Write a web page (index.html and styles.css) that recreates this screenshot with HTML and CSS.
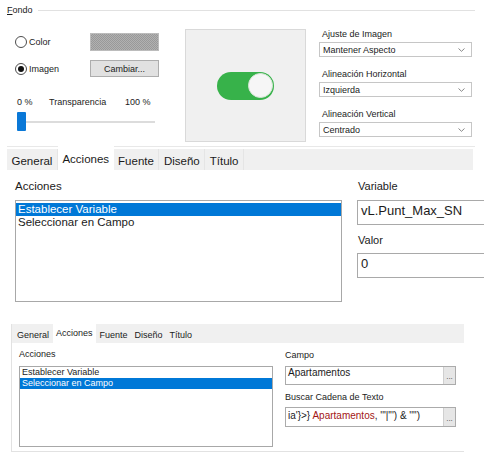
FILE: index.html
```html
<!DOCTYPE html>
<html lang="es">
<head>
<meta charset="utf-8">
<title>Propiedades</title>
<link rel="stylesheet" href="styles.css">
</head>
<body>
<section class="fondo">
  <div class="legend"><span><u>F</u>ondo</span><span class="rule"></span></div>
  <div class="fondo-body">
    <div class="left">
      <div class="opt-grid">
        <div class="radio-row"><span class="radio"></span><span>Color</span></div>
        <div class="swatch"></div>
        <div class="radio-row"><span class="radio on"></span><span>Imagen</span></div>
        <div class="btn">Cambiar...</div>
      </div>
      <div class="trans-labels"><span class="t0">0 %</span><span class="tmid">Transparencia</span><span>100 %</span></div>
      <div class="slider"><span class="thumb"></span><span class="track"></span></div>
    </div>
    <div class="preview">
      <div class="toggle"><span class="knob"></span></div>
    </div>
    <div class="right">
      <div class="field">
        <div class="flabel">Ajuste de Imagen</div>
        <div class="select"><span>Mantener Aspecto</span><svg class="chev" width="7" height="4" viewBox="0 0 7 4"><path d="M0.5 0.5 L3.5 3.3 L6.5 0.5" fill="none" stroke="#7a7a7a" stroke-width="0.9"/></svg></div>
      </div>
      <div class="field">
        <div class="flabel">Alineación Horizontal</div>
        <div class="select"><span>Izquierda</span><svg class="chev" width="7" height="4" viewBox="0 0 7 4"><path d="M0.5 0.5 L3.5 3.3 L6.5 0.5" fill="none" stroke="#7a7a7a" stroke-width="0.9"/></svg></div>
      </div>
      <div class="field">
        <div class="flabel">Alineación Vertical</div>
        <div class="select"><span>Centrado</span><svg class="chev" width="7" height="4" viewBox="0 0 7 4"><path d="M0.5 0.5 L3.5 3.3 L6.5 0.5" fill="none" stroke="#7a7a7a" stroke-width="0.9"/></svg></div>
      </div>
    </div>
  </div>
  <div class="sep"></div>
</section>

<section class="big">
  <div class="tabs-big">
    <span class="tab">General</span>
    <span class="tab active">Acciones</span>
    <span class="tab">Fuente</span>
    <span class="tab">Diseño</span>
    <span class="tab">Título</span>
  </div>
  <div class="big-body">
    <div class="col-list">
      <div class="lbl-big">Acciones</div>
      <div class="list-big">
        <div class="item sel">Establecer Variable</div>
        <div class="item">Seleccionar en Campo</div>
      </div>
    </div>
    <div class="col-var">
      <div class="lbl-var">Variable</div>
      <div class="input-big">vL.Punt_Max_SN</div>
      <div class="lbl-var second">Valor</div>
      <div class="input-big">0</div>
    </div>
  </div>
</section>

<section class="small">
  <div class="tabs-sm">
    <span class="tab">General</span>
    <span class="tab active">Acciones</span>
    <span class="tab">Fuente</span>
    <span class="tab">Diseño</span>
    <span class="tab">Título</span>
  </div>
  <div class="small-body">
    <div class="col-list-sm">
      <div class="lbl-sm">Acciones</div>
      <div class="list-sm">
        <div class="item">Establecer Variable</div>
        <div class="item sel">Seleccionar en Campo</div>
      </div>
    </div>
    <div class="col-fields">
      <div class="lbl-campo">Campo</div>
      <div class="input-sm"><span class="val">Apartamentos</span><span class="dots">...</span></div>
      <div class="lbl-campo second">Buscar Cadena de Texto</div>
      <div class="input-sm tall"><span class="val">ia'}&gt;} <span class="red">Apartamentos</span>, '"|"') &amp; '"')</span><span class="dots">...</span></div>
    </div>
  </div>
</section>
</body>
</html>
```

FILE: styles.css
```css
* { box-sizing: border-box; }
html, body { margin: 0; padding: 0; }
body {
  width: 484px;
  height: 455px;
  overflow: hidden;
  background: #fff;
  font-family: "Liberation Sans", Arial, sans-serif;
  color: #1b1b1b;
}

/* ---------- Fondo ---------- */
.fondo { padding: 4px 9px 0 7px; font-size: 9px; }
.legend { display: flex; align-items: center; height: 12px; line-height: 12px; }
.legend .rule { flex: 1; height: 1px; background: #e1e1e1; margin-left: 5px; }
.fondo-body { display: flex; margin-top: 13px; }

.left { margin-left: 8px; width: 144px; padding-top: 4px; flex-shrink: 0; }
.opt-grid {
  display: grid;
  grid-template-columns: 75px 69px;
  grid-template-rows: 18px 17px;
  row-gap: 9px;
  align-items: center;
}
.radio-row { display: flex; align-items: center; gap: 2px; }
.radio {
  width: 12px; height: 12px;
  border: 1px solid #4d4d4d;
  border-radius: 50%;
  background: #fff;
  display: flex; align-items: center; justify-content: center;
}
.radio.on::after { content: ""; width: 6px; height: 6px; border-radius: 50%; background: #111; }
.swatch {
  height: 18px;
  border: 1px solid #bcbcbc;
  background-color: #a4a4a4;
  background-image: repeating-conic-gradient(#999 0 25%, #b1b1b1 0 50%);
  background-size: 2px 2px;
}
.btn {
  height: 17px;
  border: 1px solid #adadad;
  background: #e1e1e1;
  display: flex; align-items: center; justify-content: center;
}
.trans-labels { display: flex; margin-top: 20px; padding-left: 2px; line-height: 10px; }
.t0 { width: 32px; }
.tmid { width: 76px; }
.slider { display: flex; align-items: center; margin: 5px 0 0 2px; width: 138px; }
.thumb { width: 9px; height: 19px; background: #0a78d7; border-radius: 1px; }
.track { flex: 1; height: 2px; background: #dcdcdc; }

.preview {
  margin-left: 26px;
  width: 121px; height: 113px;
  flex-shrink: 0;
  background: #f0f0f0;
  border: 1px solid #d9d9d9;
  display: flex; align-items: center; justify-content: center;
}
.toggle {
  width: 57px; height: 28px;
  border-radius: 14px;
  background: #37b24a;
  display: flex; align-items: center; justify-content: flex-end;
  padding-right: 1px;
}
.knob {
  width: 25px; height: 25px;
  border-radius: 50%;
  background: #f6f6f6;
  border: 1px solid #d6e6d6;
}

.right { margin-left: 13px; width: 153px; flex-shrink: 0; }
.field + .field { margin-top: 12px; }
.flabel { line-height: 11px; margin-bottom: 2px; padding-left: 3px; }
.select {
  height: 15px;
  border: 1px solid #c6c6c6;
  display: flex; align-items: center; justify-content: space-between;
  padding: 0 6px 0 3px;
  background: #fff;
}
.sep { margin-top: 4px; height: 1px; background: #e8e8e8; }

/* ---------- Big tabs panel ---------- */
.big { margin: 2px 11px 0 7px; }
.tabs-big { display: flex; height: 21px; background: #f0f0f0; font-size: 11.5px; }
.tabs-big .tab { padding: 4px 4.5px 0; line-height: 16px; border-right: 1px solid #e5e5e5; }
.tabs-big .tab.active { background: #fff; margin-top: -3px; height: 24px; padding-top: 5px; border-right: none; }
.big-body { display: flex; padding: 9px 0 0 8px; }
.col-list { width: 327px; flex-shrink: 0; }
.lbl-big { font-size: 11.5px; line-height: 14px; margin-bottom: 7px; }
.list-big {
  height: 102px;
  border: 1px solid #a8a8a8;
  padding-top: 2px;
  font-size: 11.5px;
  line-height: 13px;
}
.item { padding-left: 2px; white-space: nowrap; }
.item.sel { background: #0078d7; color: #fff; }
.col-var { margin-left: 15px; width: 140px; flex-shrink: 0; }
.lbl-var { font-size: 11px; line-height: 14px; margin-bottom: 7px; padding-left: 1px; }
.lbl-var.second { margin-top: 8px; margin-bottom: 6px; }
.input-big {
  height: 25px;
  border: 1px solid #a9a9a9;
  font-size: 13px;
  line-height: 16px;
  padding: 2px 0 0 3px;
  white-space: nowrap;
}

/* ---------- Small tabs panel ---------- */
.small {
  margin: 22px 20px 0 11px;
  border-left: 1px solid #e2e2e2;
  border-bottom: 1px solid #e2e2e2;
  padding-bottom: 4px;
  font-size: 9px;
}
.tabs-sm { display: flex; height: 19px; background: #f0f0f0; }
.tabs-sm .tab { padding: 3px 3.5px 0; line-height: 16px; }
.tabs-sm .tab:first-child { padding-left: 5px; }
.tabs-sm .tab.active { background: #fff; padding-top: 1px; }
.small-body { display: flex; padding: 5px 0 0 7px; }
.col-list-sm { width: 254px; flex-shrink: 0; }
.lbl-sm { line-height: 12px; margin-bottom: 6px; }
.list-sm { height: 81px; border: 1px solid #a8a8a8; line-height: 11px; }
.col-fields { margin-left: 12px; width: 171px; flex-shrink: 0; }
.lbl-campo { line-height: 12px; margin-top: 1px; margin-bottom: 5px; }
.lbl-campo.second { margin-top: 6px; margin-bottom: 4px; }
.input-sm { display: flex; height: 19px; border: 1px solid #ababab; font-size: 10px; }
.input-sm.tall { height: 20px; }
.input-sm .val { flex: 1; padding-left: 2px; line-height: 11px; white-space: nowrap; overflow: hidden; }
.input-sm.tall .val { padding-top: 2px; }
.red { color: #a31515; }
.dots {
  width: 12px;
  background: #e6e6e6;
  border-left: 1px solid #cfcfcf;
  font-size: 8px;
  line-height: 8px;
  color: #444;
  display: flex; align-items: flex-end; justify-content: center;
  padding-bottom: 3px;
}
```
